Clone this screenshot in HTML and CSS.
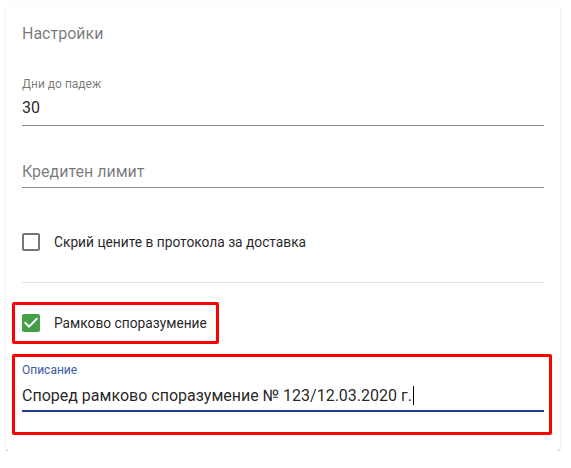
FILE: index.html
```html
<!DOCTYPE html>
<html lang="bg">
    <head>
        <meta charset="UTF-8" />
        <title>Настройки</title>
        <link rel="stylesheet" href="styles.css">
    </head>
    <body>
        <div class="karta">
            <div class="zaglavie">Настройки</div>

            <div class="pole pole-dni">
                <div class="etiket">Дни до падеж</div>
                <div class="vhod">30</div>
            </div>

            <div class="pole pole-limit">
                <div class="vhod prazno">Кредитен лимит</div>
            </div>

            <div class="red red-skrij">
                <svg class="kutiya" width="18" height="18" viewBox="3 3 18 18">
                    <path fill="#757575" d="M19 5v14H5V5h14m0-2H5c-1.1 0-2 .9-2 2v14c0 1.1.9 2 2 2h14c1.1 0 2-.9 2-2V5c0-1.1-.9-2-2-2z"/>
                </svg>
                <span>Скрий цените в протокола за доставка</span>
            </div>

            <div class="razdelitel"></div>

            <div class="otbeliazano ramkovo">
                <div class="red">
                    <svg class="kutiya" width="18" height="18" viewBox="3 3 18 18">
                        <rect x="4" y="4" width="16" height="16" fill="#fff"/>
                        <path fill="#43a047" d="M19 3H5c-1.11 0-2 .9-2 2v14c0 1.1.89 2 2 2h14c1.11 0 2-.9 2-2V5c0-1.1-.89-2-2-2zm-9 14l-5-5 1.41-1.41L10 14.17l7.59-7.59L19 8l-9 9z"/>
                    </svg>
                    <span>Рамково споразумение</span>
                </div>
            </div>

            <div class="otbeliazano opisanie">
                <div class="pole aktivno">
                    <div class="etiket">Описание</div>
                    <div class="vhod">Според рамково споразумение № 123/12.03.2020 г.<span class="kursor"></span></div>
                </div>
            </div>
        </div>
    </body>
</html>
```

FILE: styles.css
```css
body {
    margin: 0;
    background: #fff;
    font-family: Roboto, "Noto Sans", sans-serif;
    color: rgba(0, 0, 0, 0.87);
}

.karta {
    margin: 6px 11px 0 6px;
    padding: 16px;
    border-radius: 4px;
    background: #fff;
    box-shadow: 0 2px 1px -1px rgba(0, 0, 0, 0.2), 0 1px 1px 0 rgba(0, 0, 0, 0.14), 0 1px 3px 0 rgba(0, 0, 0, 0.12);
}

.zaglavie {
    font-size: 16px;
    line-height: 24px;
    color: rgba(0, 0, 0, 0.54);
}

.pole {
    border-bottom: 1px solid rgba(0, 0, 0, 0.45);
}

.etiket {
    font-size: 12px;
    line-height: 12px;
    color: rgba(0, 0, 0, 0.54);
    margin-bottom: 8px;
}

.vhod {
    font-size: 16px;
    line-height: 20px;
    padding-bottom: 7px;
}

.pole-dni {
    margin-top: 32px;
}

.pole-limit {
    margin-top: 36px;
}

.pole-limit .vhod {
    padding-bottom: 5px;
}

.prazno {
    color: rgba(0, 0, 0, 0.54);
}

.red {
    display: flex;
    align-items: center;
    font-size: 13.75px;
    line-height: 18px;
}

.kutiya {
    display: block;
    margin-right: 14px;
    flex-shrink: 0;
}

.red-skrij {
    margin-top: 45px;
}

.razdelitel {
    margin-top: 31px;
    height: 1px;
    background: rgba(0, 0, 0, 0.12);
}

.otbeliazano {
    border: 3px solid #f00;
    border-radius: 2px;
    margin-left: -10px;
}

.ramkovo {
    width: fit-content;
    margin-top: 19px;
    padding: 9px 9px 9px 7px;
}

.opisanie {
    margin-top: 10px;
    margin-right: -8px;
    padding: 7px 5px 20px 7px;
}

.aktivno {
    border-bottom: 2px solid #23408e;
}

.aktivno .etiket {
    color: #3b5aa8;
    margin-bottom: 10px;
}

.aktivno .vhod {
    padding-bottom: 4px;
}

.kursor {
    display: inline-block;
    width: 1px;
    height: 19px;
    margin-left: 1px;
    background: #000;
    vertical-align: -4px;
}
```
